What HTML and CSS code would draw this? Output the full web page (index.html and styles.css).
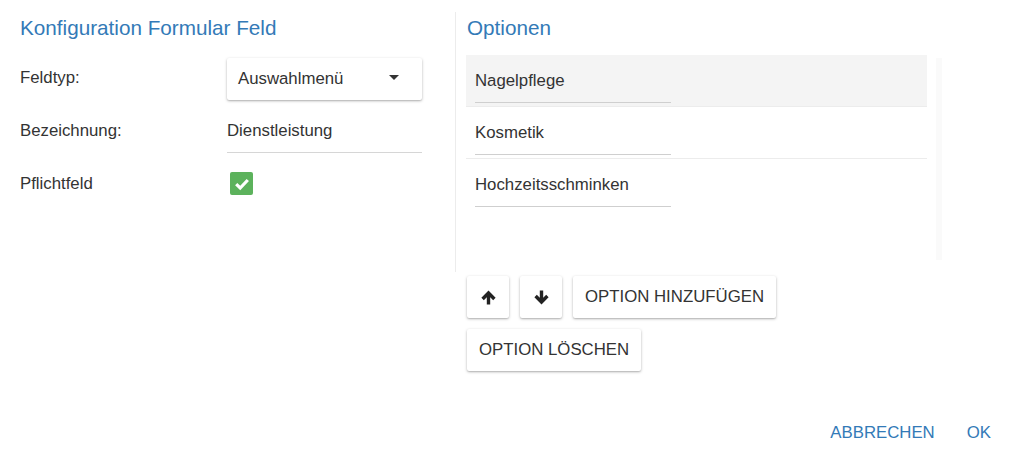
FILE: index.html
```html
<!DOCTYPE html>
<html lang="de">
<head>
    <meta charset="UTF-8">
    <meta name="viewport" content="width=device-width, initial-scale=1.0">
    <title>Konfiguration Formular Feld</title>
    <link rel="stylesheet" href="styles.css">
</head>
<body>
    <div class="dialog">
        <div class="columns">
            <div class="config">
                <h2 class="section-title">Konfiguration Formular Feld</h2>

                <div class="form-row">
                    <label class="form-label">Feldtyp:</label>
                    <div class="select-box">
                        <span>Auswahlmenü</span>
                        <span class="caret"></span>
                    </div>
                </div>

                <div class="form-row">
                    <label class="form-label" for="fieldName">Bezeichnung:</label>
                    <input type="text" id="fieldName" class="text-input" value="Dienstleistung" />
                </div>

                <div class="form-row">
                    <label class="form-label">Pflichtfeld</label>
                    <span class="checkbox">
                        <svg width="16" height="16" viewBox="0 0 16 16">
                            <path d="M2.2 8.2 L6.2 12 L13.8 4" fill="none" stroke="#fff" stroke-width="3.2" />
                        </svg>
                    </span>
                </div>
            </div>

            <div class="options">
                <div class="options-panel">
                    <h2 class="section-title">Optionen</h2>
                    <div class="option-scroll">
                        <div class="option-list">
                            <div class="option-item selected">
                                <input type="text" class="option-input" value="Nagelpflege" />
                            </div>
                            <div class="option-item">
                                <input type="text" class="option-input" value="Kosmetik" />
                            </div>
                            <div class="option-item last">
                                <input type="text" class="option-input" value="Hochzeitsschminken" />
                            </div>
                        </div>
                        <div class="scroll-track"></div>
                    </div>
                </div>

                <div class="option-actions">
                    <div class="action-row">
                        <button class="btn icon-btn" title="Nach oben">
                            <svg width="15" height="15" viewBox="0 0 15 15">
                                <path d="M7.5 14.5 V3.5 M1.6 9 L7.5 3 L13.4 9" fill="none" stroke="#222" stroke-width="3.4" />
                            </svg>
                        </button>
                        <button class="btn icon-btn" title="Nach unten">
                            <svg width="15" height="15" viewBox="0 0 15 15">
                                <path d="M7.5 0.5 V11.5 M1.6 6 L7.5 12 L13.4 6" fill="none" stroke="#222" stroke-width="3.4" />
                            </svg>
                        </button>
                        <button class="btn">Option hinzufügen</button>
                    </div>
                    <div class="action-row">
                        <button class="btn">Option löschen</button>
                    </div>
                </div>
            </div>
        </div>

        <div class="footer">
            <button class="flat-btn">Abbrechen</button>
            <button class="flat-btn">OK</button>
        </div>
    </div>
</body>
</html>
```

FILE: styles.css
```css
body {
    margin: 0;
    font-family: 'Liberation Sans', Arial, sans-serif;
    font-size: 16.8px;
    color: #333;
    background: #fff;
}
.dialog {
    padding: 12px 0 0 20px;
}
.columns {
    display: flex;
}
.config {
    width: 402px;
}
.section-title {
    margin: 0;
    font-size: 20.7px;
    font-weight: normal;
    line-height: 32px;
    color: #337ab7;
}
.config .section-title {
    margin-bottom: 8px;
}
.form-row {
    display: flex;
    align-items: center;
    height: 52px;
}
.form-row + .form-row {
    height: 53px;
}
.form-label {
    width: 207px;
    flex-shrink: 0;
}
.select-box {
    width: 196px;
    height: 42px;
    display: flex;
    align-items: center;
    justify-content: space-between;
    padding: 0 23px 0 11px;
    box-sizing: border-box;
    background: #fff;
    border-radius: 2px;
    box-shadow: 0 1px 3px rgba(0,0,0,0.28), 0 1px 1px rgba(0,0,0,0.08);
    margin-top: 2px;
}
.caret {
    width: 0;
    height: 0;
    border-left: 5px solid transparent;
    border-right: 5px solid transparent;
    border-top: 5px solid #333;
    margin-top: -3px;
}
.text-input {
    width: 195px;
    min-width: 0;
    height: 42px;
    padding: 0;
    border: none;
    border-bottom: 1px solid #d6d6d6;
    font: inherit;
    color: #333;
    background: transparent;
    outline: none;
    margin-top: 2px;
}
.checkbox {
    width: 23px;
    height: 23px;
    margin-left: 3px;
    border-radius: 2px;
    background: #5cb25c;
    display: flex;
    align-items: center;
    justify-content: center;
}
.options {
    margin-left: 33px;
}
.options-panel {
    border-left: 1px solid #ececec;
    padding: 0 0 12px 10px;
}
.options-panel .section-title {
    padding-left: 1px;
    margin-bottom: 11px;
}
.option-scroll {
    display: flex;
    height: 205px;
}
.option-list {
    width: 461px;
}
.option-item {
    height: 52px;
    box-sizing: border-box;
    padding: 5px 0 0 9px;
    border-bottom: 1px solid #ececec;
}
.option-item.selected {
    background: #f4f4f4;
}
.option-item.last {
    border-bottom: none;
}
.option-input {
    width: 196px;
    height: 42px;
    padding: 0;
    border: none;
    border-bottom: 1px solid #cfcfcf;
    font: inherit;
    color: #333;
    background: transparent;
    outline: none;
}
.scroll-track {
    width: 6px;
    margin: 3px 0 0 9px;
    background: #fafafa;
}
.option-actions {
    padding-left: 12px;
    margin-top: 4px;
}
.action-row {
    display: flex;
    gap: 11px;
    margin-bottom: 11px;
}
.btn {
    height: 42px;
    padding: 0 12px;
    border: none;
    border-radius: 2px;
    background: #fff;
    box-shadow: 0 1px 3px rgba(0,0,0,0.28), 0 1px 1px rgba(0,0,0,0.08);
    font: inherit;
    color: #333;
    text-transform: uppercase;
    cursor: pointer;
}
.icon-btn {
    width: 42px;
    padding: 0;
    display: flex;
    align-items: center;
    justify-content: center;
}
.footer {
    display: flex;
    justify-content: flex-end;
    margin-top: 30px;
    padding-right: 17px;
}
.flat-btn {
    height: 42px;
    padding: 0 16px;
    border: none;
    background: none;
    font: inherit;
    color: #337ab7;
    text-transform: uppercase;
    cursor: pointer;
}
```
